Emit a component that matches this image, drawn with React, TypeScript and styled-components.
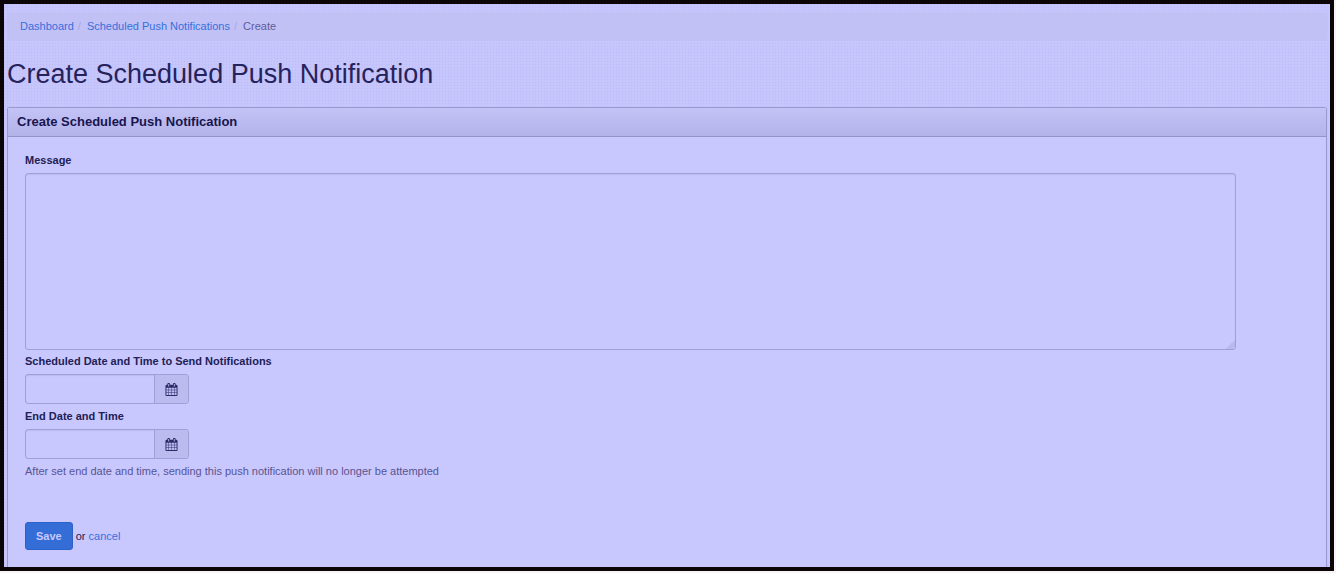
import React from "react";
import styled, { createGlobalStyle } from "styled-components";

const GlobalStyle = createGlobalStyle`
  * { box-sizing: border-box; }
  body {
    margin: 0;
    background: #f6f6f6;
    color: #222054;
    font-family: "Liberation Sans", Arial, sans-serif;
    font-size: 11px;
    line-height: 16px;
  }
`;

const Page = styled.div`
  display: flex;
  min-height: 100vh;
  padding: 0 2px 2px 0;
`;

const Frame = styled.main`
  flex: 1;
  display: flex;
  flex-direction: column;
  min-width: 0;
  padding: 8px 3px 0;
  border: 4px solid #0b0508;
  background-color: #c7c7fe;
  background-image:
    linear-gradient(90deg, rgba(90, 90, 170, 0.03) 1px, transparent 1px),
    linear-gradient(rgba(90, 90, 170, 0.03) 1px, transparent 1px);
  background-size: 3px 3px;
`;

const Breadcrumb = styled.ol`
  display: flex;
  margin: 0;
  padding: 6px 13px 7px;
  list-style: none;
  border-radius: 3px;
  background: #c1c1f6;
`;

const Crumb = styled.li`
  color: #625c98;

  & + &::before {
    content: "/";
    padding: 0 6px 0 4px;
    color: #a9a7dc;
  }
`;

const Link = styled.a`
  color: #3670dc;
  text-decoration: none;
`;

const Title = styled.h1`
  margin: 17px 0 16px;
  font-size: 27px;
  font-weight: 400;
  line-height: 33px;
  color: #26235c;
`;

const Panel = styled.section`
  flex: 1;
  border: 1px solid #9998cf;
  border-bottom: 0;
  border-radius: 3px 3px 0 0;
  background: #c8c8ff;
`;

const PanelTitle = styled.h2`
  margin: 0;
  padding: 6px 9px;
  border-bottom: 1px solid #9593cb;
  background: linear-gradient(#c3c3f8, #b3b3e9);
  font-size: 13px;
  line-height: 16px;
  color: #18154e;
`;

const Form = styled.form`
  display: flex;
  flex-direction: column;
  align-items: flex-start;
  padding: 15px 17px;
`;

const Label = styled.label`
  margin-bottom: 5px;
  font-weight: 700;
`;

const MessageBox = styled.textarea`
  display: block;
  width: calc(100% - 73px);
  height: 177px;
  margin-bottom: 3px;
  padding: 6px 12px;
  border: 1px solid #a09fd6;
  border-radius: 3px;
  background: transparent;
  box-shadow: inset 0 1px 1px rgba(40, 40, 110, 0.08);
  color: inherit;
  font: inherit;
  resize: none;
`;

const MessageArea = styled.div`
  position: relative;
  width: 100%;
`;

const Grip = styled.span`
  position: absolute;
  right: 74px;
  bottom: 4px;
  width: 9px;
  height: 9px;
  border-radius: 0 0 2px 0;
  background: linear-gradient(135deg, transparent 50%, #b9b8ef 50%);
  pointer-events: none;
`;

const DateGroup = styled.div`
  display: flex;
  width: 164px;
  height: 30px;
  margin-bottom: 4px;
  border: 1px solid #a09fd6;
  border-radius: 3px;
  box-shadow: inset 0 1px 1px rgba(40, 40, 110, 0.08);
  overflow: hidden;
`;

const DateInput = styled.input`
  flex: 1;
  min-width: 0;
  padding: 4px 10px;
  border: 0;
  background: transparent;
  color: inherit;
  font: inherit;
`;

const PickerButton = styled.button`
  display: flex;
  align-items: center;
  justify-content: center;
  width: 34px;
  padding: 0;
  border: 0;
  border-left: 1px solid #a09fd6;
  background: #bbbbf0;
  color: #2f2b68;
`;

const Help = styled.p`
  margin: 0;
  color: #59548f;
`;

const Actions = styled.div`
  display: flex;
  align-items: center;
  gap: 3px;
  margin-top: 43px;
`;

const SaveButton = styled.button`
  height: 28px;
  padding: 0 10px;
  border: 1px solid #2d60cb;
  border-radius: 3px;
  background: #356dd6;
  color: #c8c8ff;
  font: inherit;
  font-weight: 700;
`;

function CalendarIcon() {
  return (
    <svg width="13" height="13" viewBox="0 0 1792 1792" fill="currentColor" aria-hidden="true">
      <path d="M192 1664h288v-288h-288v288zm352 0h320v-288h-320v288zm-352-352h288v-320h-288v320zm352 0h320v-320h-320v320zm-352-384h288v-288h-288v288zm736 736h320v-288h-320v288zm-384-736h320v-288h-320v288zm768 736h288v-288h-288v288zm-384-352h320v-320h-320v320zm-352-864v-288q0-13-9.5-22.5t-22.5-9.5h-64q-13 0-22.5 9.5t-9.5 22.5v288q0 13 9.5 22.5t22.5 9.5h64q13 0 22.5-9.5t9.5-22.5zm736 864h288v-320h-288v320zm-384-384h320v-288h-320v288zm384 0h288v-288h-288v288zm32-480v-288q0-13-9.5-22.5t-22.5-9.5h-64q-13 0-22.5 9.5t-9.5 22.5v288q0 13 9.5 22.5t22.5 9.5h64q13 0 22.5-9.5t9.5-22.5zm384-64v1280q0 52-38 90t-90 38h-1408q-52 0-90-38t-38-90v-1280q0-52 38-90t90-38h128v-96q0-66 47-113t113-47h64q66 0 113 47t47 113v96h384v-96q0-66 47-113t113-47h64q66 0 113 47t47 113v96h128q52 0 90 38t38 90z" />
    </svg>
  );
}

function DateField({ id, label }: { id: string; label: string }) {
  return (
    <>
      <Label htmlFor={id}>{label}</Label>
      <DateGroup>
        <DateInput id={id} type="text" />
        <PickerButton type="button" aria-label={label}>
          <CalendarIcon />
        </PickerButton>
      </DateGroup>
    </>
  );
}

export default function App() {
  return (
    <Page>
      <GlobalStyle />
      <Frame>
        <nav>
          <Breadcrumb>
            <Crumb><Link href="#dashboard">Dashboard</Link></Crumb>
            <Crumb><Link href="#scheduled">Scheduled Push Notifications</Link></Crumb>
            <Crumb>Create</Crumb>
          </Breadcrumb>
        </nav>
        <Title>Create Scheduled Push Notification</Title>
        <Panel>
          <PanelTitle>Create Scheduled Push Notification</PanelTitle>
          <Form onSubmit={(e) => e.preventDefault()}>
            <Label htmlFor="message">Message</Label>
            <MessageArea>
              <MessageBox id="message" />
              <Grip />
            </MessageArea>
            <DateField id="send-at" label="Scheduled Date and Time to Send Notifications" />
            <DateField id="end-at" label="End Date and Time" />
            <Help>After set end date and time, sending this push notification will no longer be attempted</Help>
            <Actions>
              <SaveButton type="submit">Save</SaveButton>
              <span>or <Link href="#cancel">cancel</Link></span>
            </Actions>
          </Form>
        </Panel>
      </Frame>
    </Page>
  );
}
